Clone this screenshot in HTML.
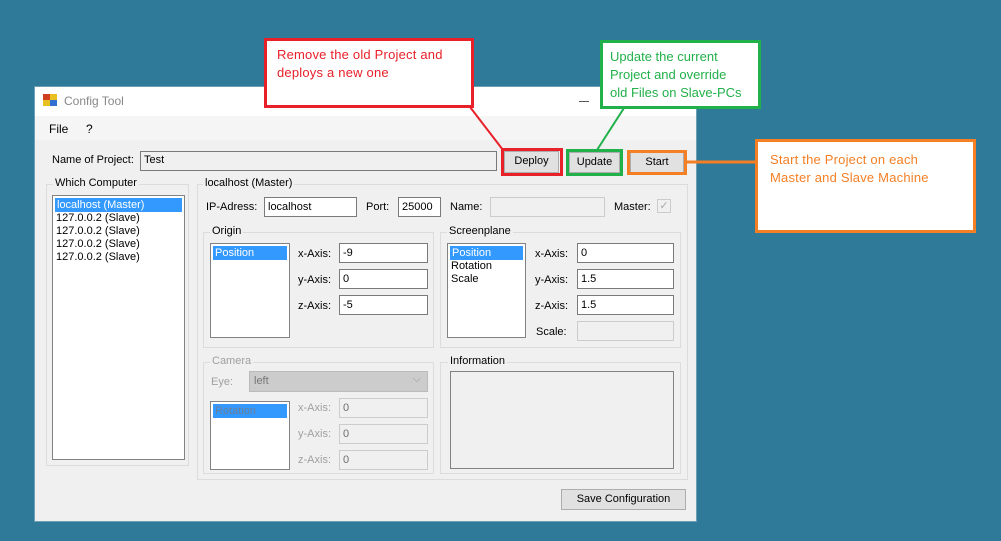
<!DOCTYPE html>
<html><head><style>
*{margin:0;padding:0;box-sizing:border-box}
body{width:1001px;height:541px;background:#2e7a98;position:relative;overflow:hidden;font-family:"Liberation Sans",sans-serif;font-size:11px;color:#000}
div,span{position:absolute}
.win{left:34px;top:86px;width:663px;height:436px;background:#f0f0f0;border:1px solid #6a9fb5}
.tb{background:#fff;border:1px solid #7a7a7a;height:20px;padding:3px 3px;white-space:nowrap}
.dis{background:#f0f0f0;border:1px solid #cccccc;color:#6d6d6d}
.grp{border:1px solid #dcdcdc}
.lg{background:#f0f0f0;padding:0 2px;top:-8px;left:6px;white-space:nowrap}
.lb{background:#fff;border:1px solid #828282}
.sel{background:#3399ff;color:#fff;left:2px;right:2px;height:14px;padding-left:2px;line-height:14px}
.it{left:4px;height:13px;line-height:13px;white-space:nowrap}
.btn{background:#e1e1e1;border:1px solid #adadad;text-align:center;line-height:19px}
.lbl{white-space:nowrap}
.g{color:#a0a0a0}
.ann{background:#fff;border:3px solid;font-size:13px;line-height:18px;padding:5px 10px;white-space:nowrap}
</style></head><body>
<div class="win">
 <div style="left:0;top:0;width:661px;height:29px;background:#fff"></div>
 <div style="left:8px;top:7px;width:7px;height:6px;background:#d04020"></div>
 <div style="left:15px;top:7px;width:7px;height:6px;background:#e8c020"></div>
 <div style="left:8px;top:13px;width:7px;height:6px;background:#e8c020"></div>
 <div style="left:15px;top:13px;width:7px;height:6px;background:#3070d0"></div>
 <div class="lbl" style="left:29px;top:7px;font-size:12px;color:#888">Config Tool</div>
 <div style="left:544px;top:14px;width:10px;height:1px;background:#555"></div>
 <div style="left:0;top:29px;width:661px;height:24px;background:#f5f5f5"></div>
 <div class="lbl" style="left:14px;top:35px;font-size:12px">File</div>
 <div class="lbl" style="left:51px;top:35px;font-size:12px">?</div>
</div>
<span class="lbl" style="left:52px;top:154px">Name of Project:</span>
<div class="tb" style="left:140px;top:151px;width:357px;background:#f0f0f0;border-color:#7a7a7a;padding-top:2px">Test</div>

<div class="grp" style="left:46px;top:184px;width:143px;height:282px"><span class="lg">Which Computer</span></div>
<div class="lb" style="left:52px;top:195px;width:133px;height:265px">
 <div class="sel" style="top:2px;left:2px">localhost (Master)</div>
 <div class="it" style="top:16px;left:3px">127.0.0.2 (Slave)</div>
 <div class="it" style="top:29px;left:3px">127.0.0.2 (Slave)</div>
 <div class="it" style="top:42px;left:3px">127.0.0.2 (Slave)</div>
 <div class="it" style="top:55px;left:3px">127.0.0.2 (Slave)</div>
</div>

<div class="grp" style="left:197px;top:184px;width:491px;height:296px"><span class="lg" style="left:5px">localhost (Master)</span></div>
<span class="lbl" style="left:206px;top:201px">IP-Adress:</span>
<div class="tb" style="left:264px;top:197px;width:93px">localhost</div>
<span class="lbl" style="left:366px;top:201px">Port:</span>
<div class="tb" style="left:398px;top:197px;width:43px">25000</div>
<span class="lbl" style="left:450px;top:201px">Name:</span>
<div class="tb dis" style="left:490px;top:197px;width:115px"></div>
<span class="lbl" style="left:614px;top:201px">Master:</span>
<div style="left:657px;top:199px;width:14px;height:14px;border:1px solid #ccc;background:#f0f0f0;color:#aaa;font-size:11px;line-height:12px;text-align:center">✓</div>

<div class="grp" style="left:203px;top:232px;width:231px;height:116px"><span class="lg">Origin</span></div>
<div class="lb" style="left:210px;top:243px;width:80px;height:95px"><div class="sel" style="top:2px">Position</div></div>
<span class="lbl" style="left:298px;top:248px">x-Axis:</span><div class="tb" style="left:339px;top:243px;width:89px">-9</div>
<span class="lbl" style="left:298px;top:274px">y-Axis:</span><div class="tb" style="left:339px;top:269px;width:89px">0</div>
<span class="lbl" style="left:298px;top:300px">z-Axis:</span><div class="tb" style="left:339px;top:295px;width:89px">-5</div>

<div class="grp" style="left:440px;top:232px;width:241px;height:116px"><span class="lg">Screenplane</span></div>
<div class="lb" style="left:447px;top:243px;width:79px;height:95px">
 <div class="sel" style="top:2px">Position</div>
 <div class="it" style="top:16px;left:3px">Rotation</div>
 <div class="it" style="top:29px;left:3px">Scale</div>
</div>
<span class="lbl" style="left:535px;top:248px">x-Axis:</span><div class="tb" style="left:577px;top:243px;width:97px">0</div>
<span class="lbl" style="left:535px;top:274px">y-Axis:</span><div class="tb" style="left:577px;top:269px;width:97px">1.5</div>
<span class="lbl" style="left:535px;top:300px">z-Axis:</span><div class="tb" style="left:577px;top:295px;width:97px">1.5</div>
<span class="lbl" style="left:536px;top:326px">Scale:</span><div class="tb dis" style="left:577px;top:321px;width:97px"></div>

<div class="grp" style="left:203px;top:362px;width:231px;height:112px"><span class="lg g">Camera</span></div>
<span class="lbl g" style="left:211px;top:376px">Eye:</span>
<div style="left:249px;top:371px;width:179px;height:21px;background:#ccc;border:1px solid #bbb;color:#777;padding:3px 4px">left<span style="right:6px;top:1px;color:#999">⌵</span></div>
<div class="lb" style="left:210px;top:401px;width:80px;height:69px"><div class="sel" style="top:2px;color:#6a7f99">Rotation</div></div>
<span class="lbl g" style="left:298px;top:402px">x-Axis:</span><div class="tb dis" style="left:339px;top:398px;width:89px">0</div>
<span class="lbl g" style="left:298px;top:428px">y-Axis:</span><div class="tb dis" style="left:339px;top:424px;width:89px">0</div>
<span class="lbl g" style="left:298px;top:454px">z-Axis:</span><div class="tb dis" style="left:339px;top:450px;width:89px">0</div>

<div class="grp" style="left:440px;top:362px;width:241px;height:112px"><span class="lg" style="left:7px">Information</span></div>
<div style="left:450px;top:371px;width:224px;height:98px;border:1px solid #828282;background:#f0f0f0"></div>

<div class="btn" style="left:561px;top:489px;width:125px;height:21px">Save Configuration</div>

<div class="btn" style="left:504px;top:151px;width:55px;height:22px">Deploy</div>
<div class="btn" style="left:569px;top:152px;width:51px;height:21px">Update</div>
<div class="btn" style="left:630px;top:152px;width:54px;height:21px">Start</div>
<div style="left:501px;top:148px;width:62px;height:28px;border:3px solid #e8202a"></div>
<div style="left:566px;top:149px;width:57px;height:27px;border:3px solid #22b04a"></div>
<div style="left:627px;top:150px;width:60px;height:25px;border:3px solid #f47f25"></div>

<svg style="position:absolute;left:0;top:0" width="1001" height="541">
 <line x1="470" y1="107" x2="503" y2="150" stroke="#e8202a" stroke-width="2"/>
 <line x1="624" y1="108" x2="597" y2="150" stroke="#22b04a" stroke-width="2"/>
 <line x1="686" y1="162" x2="756" y2="162" stroke="#f47f25" stroke-width="3"/>
</svg>

<div class="ann" style="left:264px;top:38px;width:210px;height:70px;border-color:#e8202a;color:#e8202a;letter-spacing:0.2px">Remove the old Project and<br>deploys a new one</div>
<div class="ann" style="left:600px;top:40px;width:161px;height:69px;border-color:#22b04a;color:#22b04a;padding:5px 7px">Update the current<br>Project and override<br>old Files on Slave-PCs</div>
<div class="ann" style="left:755px;top:139px;width:221px;height:94px;border-color:#f47f25;color:#f47f25;padding:9px 12px;letter-spacing:0.2px">Start the Project on each<br>Master and Slave Machine</div>
</body></html>
